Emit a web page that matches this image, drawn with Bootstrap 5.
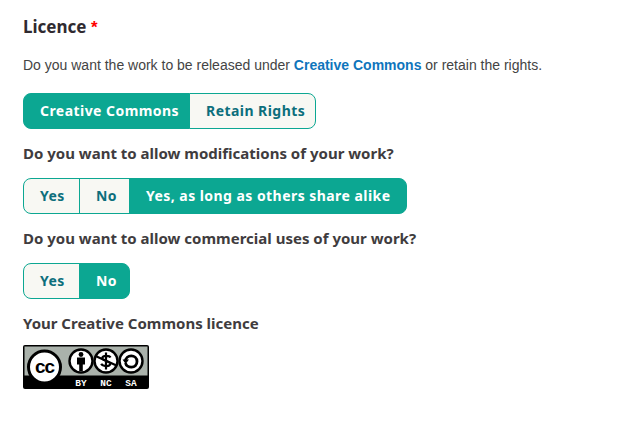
<!DOCTYPE html>
<html lang="en">
<head>
<meta charset="utf-8">
<title>Licence</title>
<link href="https://cdn.jsdelivr.net/npm/bootstrap@5.3.0/dist/css/bootstrap.min.css" rel="stylesheet">
<style>
body{background:#fff;color:#3d3a3c;font-family:"Liberation Sans",sans-serif;}
.sheet{padding:14px 23px 0;}
.lic-title{font-family:"Noto Sans",sans-serif;font-weight:700;font-size:17px;line-height:26px;color:#2f2a30;margin:0 0 14px;}
.lic-star{color:#f00;font-family:"Liberation Sans",sans-serif;font-size:17px;}
.lic-intro{font-size:14px;line-height:20px;margin:0 0 18px;color:#444;}
.lic-intro a{color:#0f75bc;font-weight:700;text-decoration:none;}
.q-label{display:block;font-family:"Noto Sans",sans-serif;font-weight:700;font-size:15px;line-height:20px;color:#403c3e;margin:0;}
.q-group{margin:15px 0 14px;height:36px;display:inline-flex;}
.q-row{display:block;}
.q-group .btn{font-family:"Noto Sans",sans-serif;font-weight:700;font-size:14px;line-height:20px;letter-spacing:.45px;padding:7px 16px;background:#f8f8f3;color:#0c6f7c;border:1px solid #0ca792;border-radius:8px;white-space:nowrap;}
.q-group .btn.on{background:#0ca792;color:#fff;}
.w-cc{width:167px}.w-rr{width:127px}
.w-yes{width:57px}.w-no{width:51px}.w-alike{width:278px}
.badge-wrap{line-height:0;margin-top:12px;}
</style>
</head>
<body>
<div class="sheet">
  <h2 class="lic-title">Licence <span class="lic-star">*</span></h2>
  <p class="lic-intro">Do you want the work to be released under <a href="#">Creative Commons</a> or retain the rights.</p>
  <div class="q-row"><div class="btn-group q-group mt-0" role="group">
    <button type="button" class="btn on w-cc">Creative Commons</button>
    <button type="button" class="btn w-rr">Retain Rights</button>
  </div></div>
  <span class="q-label">Do you want to allow modifications of your work?</span>
  <div class="q-row"><div class="btn-group q-group" role="group">
    <button type="button" class="btn w-yes">Yes</button>
    <button type="button" class="btn w-no">No</button>
    <button type="button" class="btn on w-alike">Yes, as long as others share alike</button>
  </div></div>
  <span class="q-label">Do you want to allow commercial uses of your work?</span>
  <div class="q-row"><div class="btn-group q-group" role="group">
    <button type="button" class="btn w-yes">Yes</button>
    <button type="button" class="btn on w-no">No</button>
  </div></div>
  <span class="q-label">Your Creative Commons licence</span>
  <div class="badge-wrap">
  <svg width="126" height="44" viewBox="0 0 126 44" role="img" aria-label="CC BY-NC-SA">
    <rect width="126" height="44" rx="2" fill="#000"/>
    <rect x="1.5" y="1.5" width="123" height="29" fill="#aab2ab"/>
    <circle cx="21.5" cy="22" r="16" fill="#fff" stroke="#000" stroke-width="3"/>
    <text x="21.5" y="28" text-anchor="middle" font-family="Liberation Sans" font-weight="700" font-size="19" letter-spacing="-1">cc</text>
    <g fill="#fff" stroke="#000" stroke-width="2.4">
      <circle cx="58" cy="16" r="11.5"/><circle cx="83" cy="16" r="11.5"/><circle cx="108" cy="16" r="11.5"/>
    </g>
    <circle cx="58" cy="9.5" r="2.4"/>
    <path d="M54 12.5h8v7h-2.2v6.5h-3.6v-6.500h-2.200z"/>
    <path d="M72.500 11l21 9.500" stroke="#000" stroke-width="2.200" fill="none"/>
    <path d="M87.500 12.500c-1-1.800-7.500-2.600-8.300 .5c-.5 3 8.500 3 8 6c-.7 3-7.500 2.500-9-.2M83 7.500v17" stroke="#000" stroke-width="2.200" fill="none"/>
    <path d="M102.500 16.500c0-7.500 11.500-7.500 11.500 0s-10.500 7-11.500 1.500" stroke="#000" stroke-width="2.800" fill="none"/>
    <path d="M99.500 14.500h6.500l-3.300 4.500z"/>
    <g fill="#fff" font-family="Liberation Mono" font-weight="700" font-size="9.500" text-anchor="middle">
      <text x="58" y="41">BY</text><text x="83" y="41">NC</text><text x="108" y="41">SA</text>
    </g>
  </svg>
  </div>
</div>
</body>
</html>
